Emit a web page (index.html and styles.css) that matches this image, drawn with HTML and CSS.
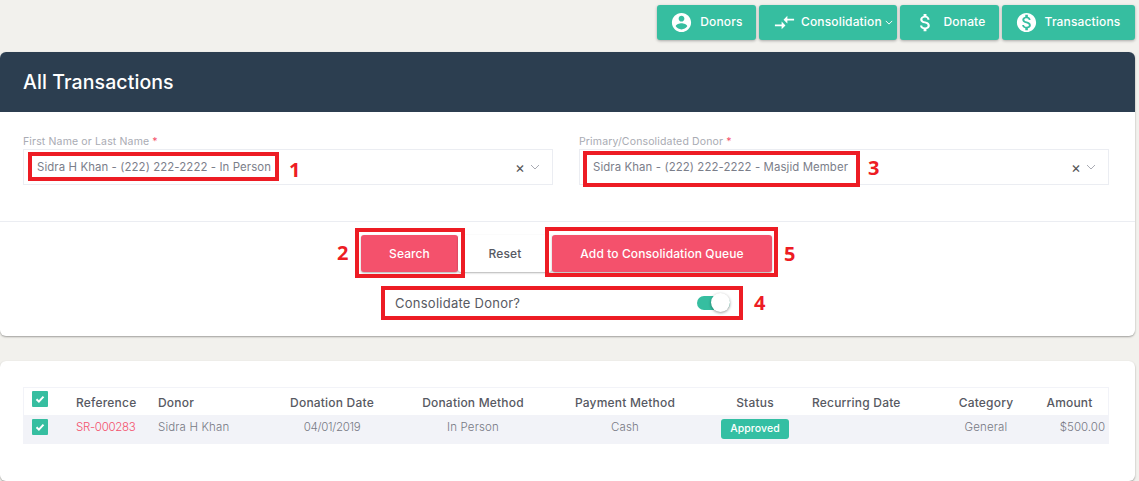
FILE: index.html
```html
<!DOCTYPE html>
<html lang="en">
<head>
<meta charset="utf-8">
<title>All Transactions</title>
<link rel="stylesheet" href="styles.css">
</head>
<body>
<nav class="toolbar">
  <a class="tbtn tbtn-donors"><svg class="ico ico-lg" viewBox="0 0 24 24"><path d="M12 2C6.48 2 2 6.48 2 12s4.48 10 10 10 10-4.48 10-10S17.52 2 12 2zm0 3c1.66 0 3 1.34 3 3s-1.34 3-3 3-3-1.34-3-3 1.34-3 3-3zm0 14.2c-2.5 0-4.71-1.28-6-3.22.03-1.99 4-3.08 6-3.08 1.99 0 5.97 1.09 6 3.08-1.29 1.94-3.5 3.22-6 3.22z"/></svg><span class="tbtn-label">Donors</span></a>
  <a class="tbtn tbtn-cons"><svg class="ico ico-lg" viewBox="0 0 24 24"><path d="M9.01 14H2v2h7.01v3L13 15l-3.99-4v3zm5.98-1v-3H22V8h-7.01V5L11 9l3.99 4z"/></svg><span class="tbtn-label">Consolidation</span><svg class="caret" viewBox="0 0 10 6"><path d="M1 1l4 4 4-4"/></svg></a>
  <a class="tbtn tbtn-donate"><svg class="ico ico-lg" viewBox="0 0 24 24"><path d="M11.8 10.9c-2.27-.59-3-1.2-3-2.15 0-1.09 1.01-1.85 2.7-1.85 1.78 0 2.44.85 2.5 2.1h2.21c-.07-1.72-1.12-3.3-3.21-3.81V3h-3v2.16c-1.94.42-3.5 1.68-3.5 3.61 0 2.31 1.91 3.46 4.7 4.13 2.5.6 3 1.48 3 2.41 0 .69-.49 1.79-2.7 1.79-2.06 0-2.87-.92-2.98-2.1h-2.2c.12 2.19 1.76 3.42 3.68 3.83V21h3v-2.15c1.95-.37 3.5-1.5 3.5-3.55 0-2.84-2.43-3.81-4.7-4.4z"/></svg><span class="tbtn-label">Donate</span></a>
  <a class="tbtn tbtn-trans"><svg class="ico ico-lg" viewBox="0 0 24 24"><path d="M12 2C6.48 2 2 6.48 2 12s4.48 10 10 10 10-4.48 10-10S17.52 2 12 2zm1.41 16.09V20h-2.67v-1.93c-1.71-.36-3.16-1.46-3.27-3.4h1.96c.1 1.05.82 1.87 2.65 1.87 1.96 0 2.4-.98 2.4-1.59 0-.83-.44-1.61-2.67-2.14-2.48-.6-4.18-1.62-4.18-3.67 0-1.72 1.39-2.84 3.11-3.21V4h2.67v1.95c1.86.45 2.79 1.86 2.85 3.39H14.3c-.05-1.11-.64-1.87-2.22-1.87-1.5 0-2.4.68-2.4 1.64 0 .84.65 1.39 2.67 1.91s4.18 1.39 4.18 3.91c-.01 1.83-1.38 2.83-3.12 3.16z"/></svg><span class="tbtn-label">Transactions</span></a>
</nav>

<section class="card card-form">
  <header class="card-head"><h1>All Transactions</h1></header>
  <div class="fields">
    <div class="field">
      <label>First Name or Last Name <span class="req">*</span></label>
      <div class="select">
        <span class="select-value">Sidra H Khan - (222) 222-2222 - In Person</span>
        <span class="select-clear">×</span>
        <svg class="select-caret" viewBox="0 0 10 6"><path d="M1 1l4 4 4-4"/></svg>
      </div>
    </div>
    <div class="field">
      <label>Primary/Consolidated Donor <span class="req">*</span></label>
      <div class="select">
        <span class="select-value">Sidra Khan - (222) 222-2222 - Masjid Member</span>
        <span class="select-clear">×</span>
        <svg class="select-caret" viewBox="0 0 10 6"><path d="M1 1l4 4 4-4"/></svg>
      </div>
    </div>
  </div>
  <div class="actions">
    <div class="action-row">
      <button class="btn btn-search">Search</button>
      <button class="btn btn-reset">Reset</button>
      <button class="btn btn-add">Add to Consolidation Queue</button>
    </div>
    <div class="switch-row">
      <span>Consolidate Donor?</span>
      <span class="switch"><span class="switch-knob"></span></span>
    </div>
  </div>
</section>

<section class="card card-table">
  <table class="grid">
    <colgroup>
      <col class="c-check"><col class="c-ref"><col class="c-donor"><col class="c-date"><col class="c-method"><col class="c-pay"><col class="c-status"><col class="c-rec"><col class="c-cat"><col class="c-amt">
    </colgroup>
    <thead>
      <tr>
        <th class="cell-check"><span class="check"><svg viewBox="0 0 16 16"><path d="M4.5 8.2l2.4 2.4 4.6-5"/></svg></span></th>
        <th class="left">Reference</th>
        <th class="left">Donor</th>
        <th>Donation Date</th>
        <th>Donation Method</th>
        <th>Payment Method</th>
        <th>Status</th>
        <th class="left">Recurring Date</th>
        <th>Category</th>
        <th>Amount</th>
      </tr>
    </thead>
    <tbody>
      <tr>
        <td class="cell-check"><span class="check"><svg viewBox="0 0 16 16"><path d="M4.5 8.2l2.4 2.4 4.6-5"/></svg></span></td>
        <td class="left ref digits">SR-000283</td>
        <td class="left">Sidra H Khan</td>
        <td class="digits">04/01/2019</td>
        <td>In Person</td>
        <td>Cash</td>
        <td class="cell-badge"><span class="badge">Approved</span></td>
        <td></td>
        <td>General</td>
        <td class="amount">$500.00</td>
      </tr>
    </tbody>
  </table>
</section>

<div class="mark mark-1"></div><span class="num num-1">1</span>
<div class="mark mark-2"></div><span class="num num-2">2</span>
<div class="mark mark-3"></div><span class="num num-3">3</span>
<div class="mark mark-4"></div><span class="num num-4">4</span>
<div class="mark mark-5"></div><span class="num num-5">5</span>
</body>
</html>
```
FILE: styles.css
```css
* { box-sizing: border-box; }
html, body { height: 481px; overflow: hidden; }
body {
  margin: 0;
  position: relative;
  background: #f2f1ed;
  font-family: Inter, "Open Sans", sans-serif;
  color: #6f7280;
}
.toolbar {
  display: flex;
  justify-content: flex-end;
  gap: 3px;
  height: 52px;
  padding: 5px 4px 0 0;
}
.tbtn {
  display: flex;
  align-items: center;
  justify-content: center;
  height: 35px;
  border-radius: 3px;
  background: #36bea0;
  color: #fff;
  font-size: 12px;
  font-weight: 500;
  letter-spacing: .15px;
  box-shadow: 0 1px 3px rgba(0,0,0,.3);
}
.tbtn-label { margin-bottom: 2px; }
.tbtn-donors { width: 99px; }
.tbtn-cons { width: 138px; justify-content: flex-start; padding-left: 14px; }
.tbtn-cons .ico-lg { margin-right: 5px; }
.tbtn-donate { width: 99px; }
.tbtn-trans { width: 133px; padding-right: 2px; }
.ico { fill: #fff; flex: none; }
.ico-lg { width: 23px; height: 23px; margin-right: 7px; }
.caret { width: 8px; height: 5px; margin-left: 3px; fill: none; stroke: #fff; stroke-width: 1.2; }
.card {
  width: 1135px;
  background: #fff;
  border-radius: 6px;
  box-shadow: 0 1px 2px rgba(0,0,0,.35);
}
.card-form { height: 284px; }
.card-head {
  height: 60px;
  padding: 0 23px;
  display: flex;
  align-items: center;
  background: #2c3e50;
  border-radius: 6px 6px 0 0;
}
.card-head h1 {
  margin: 0;
  color: #fff;
  font-size: 19.5px;
  font-weight: 500;
  letter-spacing: .1px;
}
.fields {
  display: grid;
  grid-template-columns: 530px 530px;
  column-gap: 26px;
  height: 110px;
  padding: 23px 0 0 23px;
  border-bottom: 1px solid #ebedf2;
}
.field label {
  display: block;
  height: 14px;
  font-size: 10.5px;
  line-height: 14px;
  letter-spacing: .15px;
  color: #a9abb3;
}
.req { color: #f4516c; }
.select {
  display: flex;
  align-items: center;
  height: 36px;
  padding: 0 12px 0 13px;
  border: 1px solid #ebedf2;
}
.select-value {
  flex: 1;
  font-size: 11.4px;
  letter-spacing: .1px;
  color: #7b7e8a;
}
.select-clear { font-size: 15px; color: #555; margin-right: 5px; }
.select-caret { width: 10px; height: 6px; fill: none; stroke: #a9abb3; stroke-width: 1; }
.actions {
  display: flex;
  flex-direction: column;
  align-items: center;
}
.action-row {
  display: flex;
  align-items: center;
  margin-top: 13px;
  margin-left: -2px;
  height: 37px;
}
.btn {
  height: 37px;
  padding: 0;
  border: 0;
  border-radius: 3px;
  font-family: inherit;
  font-size: 12px;
  font-weight: 500;
  letter-spacing: .1px;
  color: #fff;
  background: #f4516c;
  box-shadow: 0 1px 2px rgba(0,0,0,.3);
}
.btn-search { width: 97px; }
.btn-reset { width: 94px; background: #fff; color: #575962; }
.btn-add { width: 220px; }
.switch-row {
  display: flex;
  align-items: center;
  justify-content: space-between;
  width: 335px;
  margin-top: 19px;
  margin-right: 10px;
  height: 24px;
  font-size: 13px;
  letter-spacing: .25px;
  color: #575962;
}
.switch {
  position: relative;
  display: block;
  width: 33px;
  height: 14px;
  border-radius: 7px;
  background: #36bea0;
}
.switch-knob {
  position: absolute;
  right: 0;
  top: -3px;
  width: 19px;
  height: 19px;
  border-radius: 50%;
  background: #fff;
  box-shadow: 0 1px 3px rgba(0,0,0,.4);
}
.card-table {
  height: 120px;
  margin-top: 25px;
  padding: 26px 26px 0 23px;
}
.grid {
  width: 1086px;
  table-layout: fixed;
  border-collapse: collapse;
  font-size: 12px;
}
.c-check { width: 53px; }
.c-ref { width: 82px; }
.c-donor { width: 112px; }
.c-date { width: 124px; }
.c-method { width: 158px; }
.c-pay { width: 146px; }
.c-status { width: 114px; }
.c-rec { width: 130px; }
.c-cat { width: 88px; }
.c-amt { width: 79px; }
.grid thead tr { height: 28px; box-shadow: inset 0 1px #f2f3f8, inset 1px 0 #f2f3f8, inset -1px 0 #f2f3f8; }
.grid tbody tr { height: 29px; background: #f2f3f8; }
.grid th { font-weight: 500; letter-spacing: .2px; color: #575962; text-align: center; padding: 3px 0 0; white-space: nowrap; }
.grid td { font-weight: 300; font-size: 11.5px; letter-spacing: .15px; color: #777984; text-align: center; padding: 0 0 5px; white-space: nowrap; }
.grid .left { text-align: left; }
.grid .cell-check { text-align: left; padding: 4px 0 0 9px; vertical-align: top; }
.grid .ref { color: #f4516c; }
.grid .digits { letter-spacing: -.3px; }
.grid .amount { text-align: right; padding-right: 4px; letter-spacing: 0; }
.grid .cell-badge { padding: 4px 0 0; vertical-align: top; }
.check {
  display: block;
  width: 16px;
  height: 16px;
  border-radius: 1px;
  background: #36bea0;
}
.check svg { display: block; width: 16px; height: 16px; fill: none; stroke: #fff; stroke-width: 2; }
.badge {
  display: block;
  width: 68px;
  height: 20px;
  margin: 0 auto;
  line-height: 20px;
  border-radius: 3px;
  background: #34bfa3;
  color: #fff;
  font-size: 10.5px;
  font-weight: 500;
  letter-spacing: .1px;
}
.mark { position: absolute; border: 4px solid #ed1c24; }
.mark-1 { left: 28px; top: 152px; width: 251px; height: 29px; }
.mark-2 { left: 355px; top: 228px; width: 110px; height: 50px; }
.mark-3 { left: 583px; top: 151px; width: 277px; height: 36px; }
.mark-4 { left: 381px; top: 286px; width: 362px; height: 34px; }
.mark-5 { left: 545px; top: 227px; width: 233px; height: 50px; }
.num {
  position: absolute;
  font-family: "Open Sans", sans-serif;
  font-size: 20px;
  font-weight: 700;
  line-height: 24px;
  color: #ed1c24;
}
.num-1 { left: 289px; top: 158px; }
.num-2 { left: 337px; top: 241px; }
.num-3 { left: 868px; top: 156px; }
.num-4 { left: 754px; top: 291px; }
.num-5 { left: 784px; top: 242px; }
```
